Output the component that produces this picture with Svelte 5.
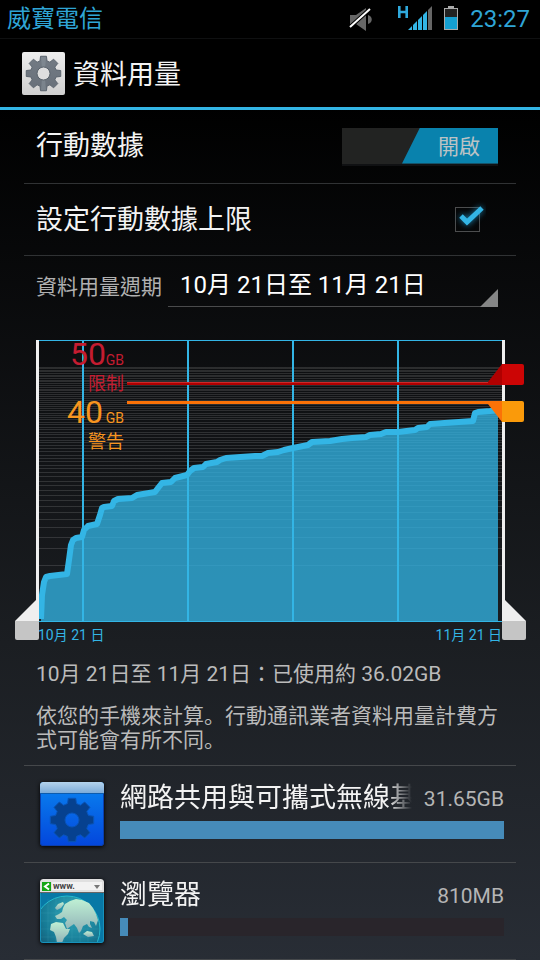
<script>
	let dataOn = true;
	let limitOn = true;
	let cycle = '10月 21日至 11月 21日';

	const plotBottom = 281;
	const plotHeight = 281;
	const maxGb = 60;

	const apps = [
		{ name: '網路共用與可攜式無線基', icon: 'settings', usage: '31.65GB', percent: 100 },
		{ name: '瀏覽器', icon: 'browser', usage: '810MB', percent: 2 }
	];

	// small values are stretched so that they stay readable
	function toY(gb) {
		const fraction = 0.905 * Math.pow(gb / maxGb, 0.3688);
		return Math.round(plotBottom - plotHeight * fraction);
	}

	const ticks = Array.from({ length: maxGb }, (_, i) => toY(i + 1));
	const weeks = [83, 188, 293, 398];

	const series = [
		[41, 279], [42, 255], [44, 242], [46, 237], [50, 236], [67, 234], [69, 220], [71, 205],
		[73, 200], [76, 198], [82, 197], [84, 190], [88, 186], [97, 184], [100, 175], [102, 168],
		[104, 167], [112, 166], [114, 161], [118, 159], [132, 158], [137, 155], [155, 152],
		[158, 148], [162, 143], [171, 142], [175, 138], [187, 135], [190, 131], [194, 128],
		[203, 127], [206, 124], [217, 122], [220, 120], [226, 118], [255, 116], [262, 116],
		[268, 113], [278, 112], [284, 110], [293, 108], [298, 107], [308, 105], [312, 102],
		[330, 101], [342, 99], [352, 98], [366, 97], [370, 95], [381, 94], [386, 92], [398, 92],
		[415, 90], [418, 88], [427, 87], [430, 84], [473, 81], [475, 73], [478, 72], [490, 71], [498, 70]
	];
	const line = 'M' + series.map((p) => p.join(' ')).join('L');
	const area = line + `V${plotBottom}H41Z`;

	function gear(cx, cy, outer, inner) {
		const pts = [];
		for (let i = 0; i < 8; i++) {
			const a = (i * Math.PI) / 4;
			for (const [r, d] of [[inner, -0.27], [outer, -0.17], [outer, 0.17], [inner, 0.27]]) {
				pts.push(`${(cx + r * Math.sin(a + d)).toFixed(2)} ${(cy - r * Math.cos(a + d)).toFixed(2)}`);
			}
		}
		return 'M' + pts.join('L') + 'Z';
	}
</script>

<div class="screen">
	<div class="status-bar">
		<span class="carrier">威寶電信</span>
		<svg class="mute" viewBox="0 0 24 26" width="24" height="26">
			<path fill="#666" d="M1 9h6l10-7v23l-10-7H1zM19 9c5 1 5 8 0 9z" />
			<path stroke="#000" stroke-width="4" d="M1 21L21 3" />
			<path stroke="#fff" stroke-width="2" d="M1 21L21 3" />
		</svg>
		<svg class="signal" viewBox="0 0 36 26" width="36" height="26">
			<path stroke="#2fa9dc" stroke-width="2.6" fill="none" d="M3.3 0V12M10.7 0V12M3 6H11" />
			<path fill="#33b5e5" d="M12 24l4-4v4zM17 19l4-4v9h-4zM22 14l4-4v14h-4zM27 9l4-4v19h-4z" />
			<path fill="#666" d="M32 4l4-4v24h-4z" />
		</svg>
		<svg class="battery" viewBox="0 0 14 26" width="14" height="26">
			<path fill="#aaa" d="M4 0h6v2h4v22H0V2h4z" />
			<path fill="#222" d="M1 3h12v8H1z" />
			<path fill="#159fd1" d="M1 11h12v12H1z" />
		</svg>
		<time>23:27</time>
	</div>

	<header>
		<svg viewBox="0 0 43 43" width="43" height="43">
			<defs>
				<linearGradient id="plate" x2="0" y2="1">
					<stop offset="0" stop-color="#eee" />
					<stop offset="1" stop-color="#cfcfcf" />
				</linearGradient>
				<linearGradient id="steel" x2="0" y2="1">
					<stop offset="0" stop-color="#737b84" />
					<stop offset="1" stop-color="#68707a" />
				</linearGradient>
			</defs>
			<rect width="43" height="43" rx="2" fill="url(#plate)" />
			<path d={gear(21.5, 21.5, 17.5, 13)} fill="url(#steel)" stroke="#5b646e" stroke-linejoin="round" />
			<path fill="#8c959d" opacity=".5" d="M19 5h5l-1 12h-3zM19 38h5l-1-12h-3z" />
			<circle cx="21.5" cy="21.5" r="6.5" fill="#dedede" stroke="#59626b" />
		</svg>
		<h1>資料用量</h1>
	</header>

	<main>
		<div class="row first">
			<span id="mobile-data">行動數據</span>
			<button
				class="switch"
				class:off={!dataOn}
				role="switch"
				aria-checked={dataOn}
				aria-labelledby="mobile-data"
				on:click={() => (dataOn = !dataOn)}
			>
				<span class="thumb">{dataOn ? '開啟' : '關閉'}</span>
			</button>
		</div>

		<label class="row">
			<span>設定行動數據上限</span>
			<span class="check">
				<input type="checkbox" bind:checked={limitOn} />
				{#if limitOn}
					<svg viewBox="0 0 34 34" width="34" height="34">
						<path class="tick" d="M9 18l6 6L30 10" />
					</svg>
				{/if}
			</span>
		</label>

		<div class="cycle">
			<label for="cycle">資料用量週期</label>
			<div class="spinner">
				<select id="cycle" bind:value={cycle}>
					<option>10月 21日至 11月 21日</option>
				</select>
			</div>
		</div>

		<svg class="chart" viewBox="0 0 540 302">
			{#each ticks as y}
				<rect x="39" {y} width="463" height="1" fill="#fff" opacity=".13" />
			{/each}
			<path d={area} fill="#33b5e5" opacity=".77" />
			<path d={line} fill="none" stroke="#33b5e5" stroke-width="6" stroke-linejoin="round" />
			{#each weeks as x}
				<rect x={x - 1} y="0" width="2" height="281" fill="#33b5e5" />
			{/each}
			<rect x="39" y="0" width="463" height="1" fill="#33b5e5" />
			<rect x="39" y="281" width="463" height="1" fill="#33b5e5" />

			<g class="range">
				<path fill="#efefef" d="M36 0h3v281H15l21-21z" />
				<path fill="#c5c5c5" d="M15 281h24v17q0 2-2 2H17q-2 0-2-2z" />
				<path fill="#efefef" d="M502 0h3v260l21 21h-24z" />
				<path fill="#c5c5c5" d="M502 281h24v17q0 2-2 2h-20q-2 0-2-2z" />
			</g>

			<g class="sweep">
				<path fill="#b00000" d="M127 42h361l14-18h1v21H127z" />
				<path fill="#cc2a2a" d="M127 42h361v1H127z" />
				<path fill="#cc0505" d="M502 24h20q2 0 2 2v17q0 2-2 2h-20z" />
				<path fill="#fb7207" d="M127 61h376v21h-1l-14-18H127z" />
				<path fill="#fa9a0a" d="M502 61h20q2 0 2 2v17q0 2-2 2h-20z" />
			</g>

			<g class="limit">
				<text class="big" x="106" y="25">50</text>
				<text class="unit" x="124" y="25">GB</text>
				<text class="caption" x="124" y="50">限制</text>
			</g>
			<g class="warning">
				<text class="big" x="103" y="83">40</text>
				<text class="unit" x="124" y="83">GB</text>
				<text class="caption" x="124" y="108">警告</text>
			</g>

			<text class="date" x="38" y="300">10月 21 日</text>
			<text class="date end" x="502" y="300">11月 21 日</text>
		</svg>

		<p class="summary">10月 21日至 11月 21日：已使用約 36.02GB</p>
		<p class="note">依您的手機來計算。行動通訊業者資料用量計費方式可能會有所不同。</p>

		<ul>
			{#each apps as app}
				<li>
					{#if app.icon === 'settings'}
						<svg class="app-icon" viewBox="0 0 64 64" width="64" height="64">
							<defs>
								<linearGradient id="blue" x2="0" y2="1">
									<stop offset="0" stop-color="#0a84f0" />
									<stop offset="1" stop-color="#0346dc" />
								</linearGradient>
								<linearGradient id="strip" x2="0" y2="1">
									<stop offset="0" stop-color="#b4d3ec" />
									<stop offset="1" stop-color="#7cabd8" />
								</linearGradient>
							</defs>
							<rect width="64" height="64" rx="3" fill="url(#blue)" />
							<path fill="url(#strip)" d="M0 11V3q0-3 3-3h58q3 0 3 3v8z" />
							<path fill="#0d5cae" d="M0 11h64v1H0z" />
							<path
								fill-rule="evenodd"
								fill="#06418f"
								stroke="#0a55b8"
								stroke-linejoin="round"
								d={gear(32, 38, 22, 17) + 'M39 38a7 7 0 1 0-14 0a7 7 0 1 0 14 0Z'}
							/>
							<path fill="none" stroke="#0b3fae" d="M.5 12v49q0 2.500 2.500 2.500h58q2.500 0 2.500-2.500V12" />
						</svg>
					{:else}
						<svg class="app-icon" viewBox="0 0 64 64" width="64" height="64">
							<defs>
								<clipPath id="frame"><rect y="14" width="64" height="50" rx="2" /></clipPath>
								<radialGradient id="sea" cx=".6" cy=".25" r=".8">
									<stop offset="0" stop-color="#2fa9ba" />
									<stop offset=".6" stop-color="#167a95" />
									<stop offset="1" stop-color="#124d68" />
								</radialGradient>
								<linearGradient id="land" x2="0" y2="1">
									<stop offset="0" stop-color="#bff0d4" />
									<stop offset="1" stop-color="#8fb0b6" />
								</linearGradient>
							</defs>
							<g clip-path="url(#frame)">
								<rect y="14" width="64" height="50" fill="#0878a6" />
								<circle cx="27" cy="50" r="33" fill="url(#sea)" stroke="#25b9cb" />
								<path
									fill="none"
									stroke="#5cc4d0"
									stroke-width=".5"
									opacity=".25"
									d="M0 34h56M0 42h60M0 50h60M0 58h60M8 20v44M16 18v46M24 17v47M32 17v47M40 20v44M48 24v40"
								/>
								<path fill="url(#land)" d="M15 29L18 25L23 23L24 25L21 29L17 31Z" />
								<path
									fill="url(#land)"
									d="M23 29L25 25L30 22L36 20L42 21L49 24L53 29L56 35L58 41L56 47L54 43L50 42L50 45L52 49L49 48L47 45L43 47L41 52L39 54L37 49L34 45L31 47L27 50L25 44L27 41L24 38L21 40L17 40L15 37L19 35L22 33Z"
								/>
								<path fill="url(#land)" d="M11 45L16 43L23 44L26 50L30 50L28 55L24 59L22 64H17L16 58L14 53L10 51Z" />
								<path fill="url(#land)" d="M43 55L47 52L52 53L54 57L48 58Z" />
							</g>
							<path fill="none" stroke="#1892bb" d="M.5 14v47q0 2.500 2.500 2.500h58q2.500 0 2.500-2.500V14" />
							<path fill="#e0e0e0" d="M0 14V3q0-3 3-3h58q3 0 3 3v11z" />
							<path fill="#666" d="M0 13h64v1H0z" />
							<path fill="#f2f2f2" d="M12 3h50v8H12z" />
							<path fill="#16a616" d="M2 3h9v9H2z" />
							<path fill="none" stroke="#fff" stroke-width="2" d="M9 4.500L5 7.500l4 3" />
							<path fill="#777" d="M54 6h6l-3 4z" />
							<text class="www" x="13" y="10">www.</text>
						</svg>
					{/if}
					<div class="info">
						<div class="names">
							<span class="name">{app.name}</span>
							<span class="usage">{app.usage}</span>
						</div>
						<div class="bar"><div class="fill" style="width: {app.percent}%"></div></div>
					</div>
				</li>
			{/each}
		</ul>
	</main>
</div>

<style>
	:global(body) {
		margin: 0;
		background: #272d34;
	}

	.screen {
		min-height: 100vh;
		background: linear-gradient(#000 0, #000 11%, #1b1e22 67%, #282d35 100%);
		color: #f3f3f3;
		font-family: Roboto, 'Noto Sans CJK TC', sans-serif;
		font-size: 27px;
	}

	.status-bar {
		display: flex;
		align-items: center;
		height: 38px;
		padding: 0 10px 0 7px;
		border-bottom: 1px solid #0f1011;
		background: #000;
		color: #2fa5d6;
		font-size: 24px;
		line-height: 40px;
	}

	.carrier {
		flex: 1;
	}

	.mute {
		margin-right: 23px;
	}

	.signal,
	.battery {
		margin-right: 12px;
	}

	header {
		display: flex;
		align-items: center;
		gap: 8px;
		height: 68px;
		padding-left: 22px;
		border-bottom: 3px solid #33b5e5;
	}

	h1 {
		margin: 0;
		padding-top: 4px;
		font-size: 27px;
		font-weight: 400;
		line-height: 32px;
	}

	.row {
		display: flex;
		justify-content: space-between;
		align-items: center;
		box-sizing: border-box;
		min-height: 72px;
		margin: 0 24px;
		padding: 0 18px 0 12px;
		border-bottom: 1px solid #303234;
		line-height: 32px;
	}

	.first {
		min-height: 74px;
		padding-bottom: 2px;
	}

	.switch {
		width: 156px;
		height: 36px;
		padding: 0;
		border: none;
		background: #222322;
		box-shadow: 0 2px 0 #101113;
		font-family: inherit;
		font-size: 21px;
		line-height: 38px;
		color: #bcc3c5;
		cursor: pointer;
	}

	.thumb {
		display: block;
		height: 36px;
		margin-left: 60px;
		padding-left: 18px;
		background: #0982ad;
		clip-path: polygon(18px 0, 100% 0, 100% 100%, 0 100%);
	}

	.switch.off .thumb {
		margin: 0 60px 0 0;
		padding: 0 18px 0 0;
		background: #444;
	}

	.check {
		position: relative;
		display: flex;
		margin-right: 18px;
	}

	.check input {
		appearance: none;
		width: 25px;
		height: 25px;
		margin: 0;
		border: 1px solid #4c4d4e;
	}

	.check svg {
		position: absolute;
		left: -3px;
		bottom: 0;
	}

	.tick {
		fill: none;
		stroke: #33b5e5;
		stroke-width: 5;
		filter: drop-shadow(0 0 3px #1c87b5);
	}

	.cycle {
		display: flex;
		gap: 6px;
		height: 84px;
		padding: 0 42px 0 36px;
		box-sizing: border-box;
	}

	.cycle label {
		flex: none;
		color: #b0b0b0;
		font-size: 21px;
		line-height: 62px;
	}

	.spinner {
		position: relative;
		flex: 1;
		height: 51px;
	}

	.spinner::after {
		content: '';
		position: absolute;
		right: 0;
		bottom: 0;
		border-bottom: 18px solid #858686;
		border-left: 18px solid transparent;
		pointer-events: none;
	}

	select {
		appearance: none;
		width: 100%;
		height: 51px;
		padding: 8px 12px 0;
		border: none;
		border-bottom: 1px solid #4a4b4c;
		border-radius: 0;
		background: none;
		color: #fff;
		font-family: inherit;
		font-size: 24px;
	}

	option {
		background: #222;
	}

	.chart {
		display: block;
		width: 100%;
		overflow: visible;
	}

	.chart text {
		text-anchor: end;
	}

	.limit {
		fill: #c41c30;
	}

	.warning {
		fill: #f8951f;
	}

	.big {
		font-size: 32px;
	}

	.unit {
		font-size: 14px;
	}

	.caption {
		font-size: 18px;
	}

	.chart .date {
		fill: #33b5e5;
		font-size: 14px;
		text-anchor: start;
	}

	.chart .date.end {
		text-anchor: end;
	}

	.summary,
	.note {
		margin: 20px 36px 0;
		color: #bbb;
		font-size: 21px;
		line-height: 24px;
	}

	.note {
		margin-top: 18px;
		font-family: Roboto, 'Noto Sans CJK SC', sans-serif;
	}

	ul {
		margin: 13px 24px 0;
		padding: 0;
		border-top: 1px solid #45484b;
		list-style: none;
	}

	li {
		display: flex;
		gap: 16px;
		padding: 16px 12px 16px 16px;
		border-bottom: 1px solid #45484b;
	}

	.app-icon {
		flex: none;
		border-radius: 3px;
		box-shadow: 0 1px 4px #000;
	}

	.www {
		fill: #444;
		font-size: 9px;
		font-weight: 700;
	}

	.info {
		flex: 1;
		min-width: 0;
	}

	.names {
		display: flex;
		gap: 12px;
		height: 30px;
		margin-bottom: 9px;
		line-height: 32px;
	}

	.name {
		flex: 1;
		overflow: hidden;
		white-space: nowrap;
		mask-image: linear-gradient(to left, transparent, #000 24px);
	}

	.usage {
		color: #b5b5b5;
		font-size: 21px;
		line-height: 34px;
	}

	.bar {
		height: 18px;
		background: #29252b;
	}

	.fill {
		height: 100%;
		background: #468bb9;
	}
</style>
